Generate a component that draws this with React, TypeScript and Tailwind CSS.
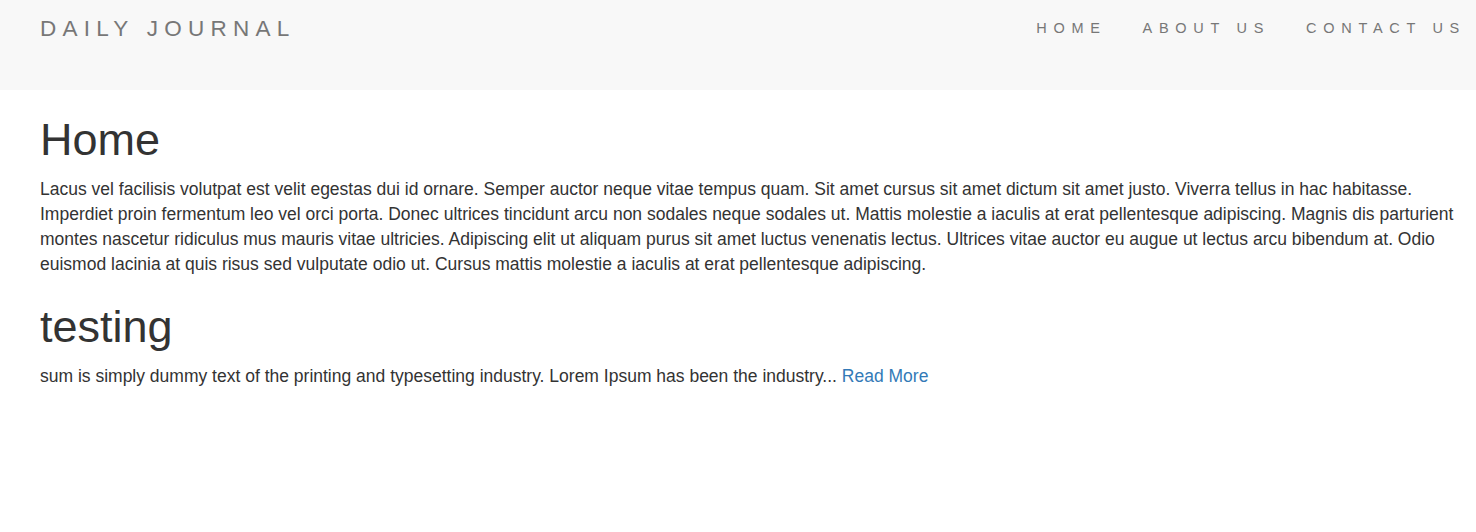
export default function App() {
  return (
    <div className="min-h-[532px] bg-white font-['Liberation_Sans',Arial,sans-serif] text-[#333]">
      <nav className="flex h-[90px] items-start justify-between bg-[#f8f8f8] pl-[40px] pr-[10px]">
        <a className="mt-[16px] text-[22.5px] leading-[25px] tracking-[6.25px] text-[#777]">DAILY JOURNAL</a>
        <ul className="mt-[18px] flex gap-[36px] text-[14.5px] leading-[20px] tracking-[6.7px] text-[#777]">
          <li>HOME</li>
          <li>ABOUT US</li>
          <li>CONTACT US</li>
        </ul>
      </nav>
      <main className="pl-[40px] pr-[19px]">
        <h1 className="mt-[25px] mb-[12.5px] text-[45px] font-normal leading-[49.5px]">Home</h1>
        <p className="mb-[12.5px] text-[17.5px] leading-[25px]">
          Lacus vel facilisis volutpat est velit egestas dui id ornare. Semper auctor neque vitae tempus quam. Sit amet cursus sit amet dictum sit amet justo. Viverra tellus in hac habitasse. Imperdiet proin fermentum leo vel orci porta. Donec ultrices tincidunt arcu non sodales neque sodales ut. Mattis molestie a iaculis at erat pellentesque adipiscing. Magnis dis parturient montes nascetur ridiculus mus mauris vitae ultricies. Adipiscing elit ut aliquam purus sit amet luctus venenatis lectus. Ultrices vitae auctor eu augue ut lectus arcu bibendum at. Odio euismod lacinia at quis risus sed vulputate odio ut. Cursus mattis molestie a iaculis at erat pellentesque adipiscing.
        </p>
        <h1 className="mt-[25px] mb-[12.5px] text-[45px] font-normal leading-[49.5px]">testing</h1>
        <p className="text-[17.5px] leading-[25px]">
          sum is simply dummy text of the printing and typesetting industry. Lorem Ipsum has been the industry...{" "}
          <a className="text-[#337ab7]">Read More</a>
        </p>
      </main>
    </div>
  );
}
